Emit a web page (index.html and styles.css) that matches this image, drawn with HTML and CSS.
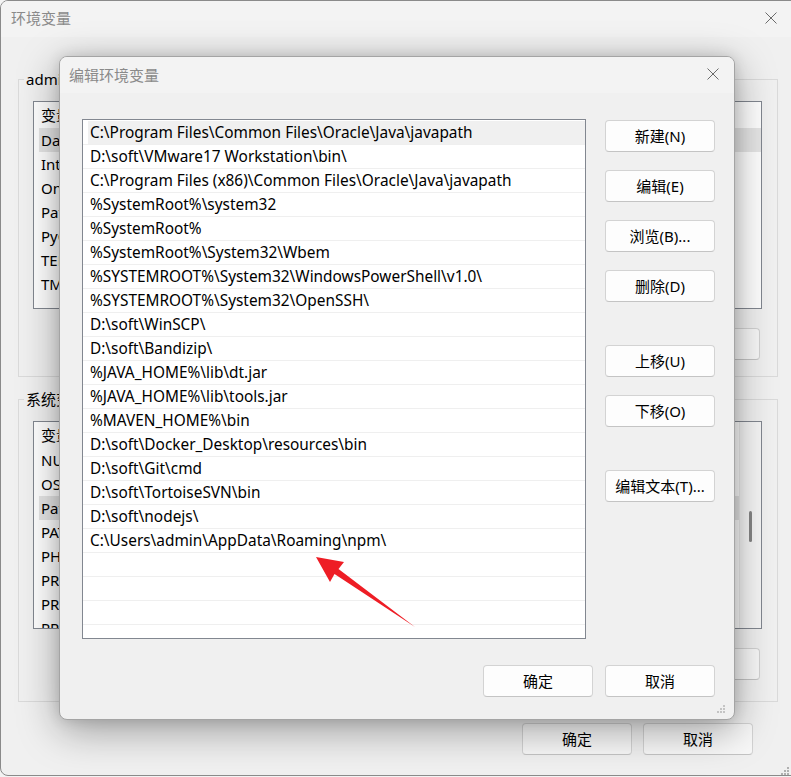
FILE: index.html
```html
<!DOCTYPE html>
<html lang="zh-CN">
<head>
<meta charset="utf-8">
<title>环境变量</title>
<link rel="stylesheet" href="styles.css">
</head>
<body>
<div class="win">
  <div class="titlebar">
    <span class="title">环境变量</span>
    <svg class="close" width="12" height="12" viewBox="0 0 12 12"><path d="M0.5 0.5 L11.5 11.5 M11.5 0.5 L0.5 11.5" /></svg>
  </div>
  <div class="winbody">
    <fieldset class="group">
      <legend>admin 的用户变量(U)</legend>
      <div class="blist">
        <div class="bhead"><span class="c1">变量</span><span>值</span></div>
        <div class="brow sel"><span class="c1">DataGrip</span><span>D:\soft\DataGrip\bin;</span></div>
        <div class="brow"><span class="c1">IntelliJ IDEA</span><span>D:\soft\IntelliJ IDEA\bin;</span></div>
        <div class="brow"><span class="c1">OneDrive</span><span>C:\Users\admin\OneDrive</span></div>
        <div class="brow"><span class="c1">Path</span><span>C:\Users\admin\AppData\Local\Microsoft\WindowsApps;</span></div>
        <div class="brow"><span class="c1">PyCharm</span><span>D:\soft\PyCharm\bin;</span></div>
        <div class="brow"><span class="c1">TEMP</span><span>C:\Users\admin\AppData\Local\Temp</span></div>
        <div class="brow"><span class="c1">TMP</span><span>C:\Users\admin\AppData\Local\Temp</span></div>
      </div>
      <div class="btnrow">
        <button class="btn bgbtn">新建(N)...</button>
        <button class="btn bgbtn">编辑(E)...</button>
        <button class="btn bgbtn">删除(D)</button>
      </div>
    </fieldset>
    <fieldset class="group group2">
      <legend>系统变量(S)</legend>
      <div class="blist">
        <div class="bhead"><span class="c1">变量</span><span>值</span></div>
        <div class="brow"><span class="c1">NUMBER_OF_PROCESSORS</span><span>16</span></div>
        <div class="brow"><span class="c1">OS</span><span>Windows_NT</span></div>
        <div class="brow sel"><span class="c1">Path</span><span>C:\Program Files\Common Files\Oracle\Java\javapath;</span></div>
        <div class="brow"><span class="c1">PATHEXT</span><span>.COM;.EXE;.BAT;.CMD;.VBS;.VBE;.JS;.JSE;.WSF;.WSH;.MSC</span></div>
        <div class="brow"><span class="c1">PHP_HOME</span><span>D:\soft\php</span></div>
        <div class="brow"><span class="c1">PROCESSOR_ARCHITECTURE</span><span>AMD64</span></div>
        <div class="brow"><span class="c1">PROCESSOR_IDENTIFIER</span><span>Intel64 Family 6</span></div>
        <div class="brow"><span class="c1">PROCESSOR_LEVEL</span><span>6</span></div>
        <div class="bscroll"><div class="bthumb"></div></div>
      </div>
      <div class="btnrow">
        <button class="btn bgbtn">新建(W)...</button>
        <button class="btn bgbtn">编辑(I)...</button>
        <button class="btn bgbtn">删除(L)</button>
      </div>
    </fieldset>
    <div class="footer">
      <button class="btn bgbtn">确定</button>
      <button class="btn bgbtn">取消</button>
    </div>
  </div>
  <svg class="grip outer-grip" width="10" height="10" viewBox="0 0 10 10"><g fill="#b0b0b0"><rect x="7" y="1" width="2" height="2"/><rect x="4" y="4" width="2" height="2"/><rect x="7" y="4" width="2" height="2"/><rect x="1" y="7" width="2" height="2"/><rect x="4" y="7" width="2" height="2"/><rect x="7" y="7" width="2" height="2"/></g></svg>
</div>

<div class="dialog">
  <div class="dtitlebar">
    <span class="title">编辑环境变量</span>
    <svg class="close" width="12" height="12" viewBox="0 0 12 12"><path d="M0.5 0.5 L11.5 11.5 M11.5 0.5 L0.5 11.5" /></svg>
  </div>
  <div class="dbody">
    <div class="plist">
      <div class="prow sel">C:\Program Files\Common Files\Oracle\Java\javapath</div>
      <div class="prow">D:\soft\VMware17 Workstation\bin\</div>
      <div class="prow">C:\Program Files (x86)\Common Files\Oracle\Java\javapath</div>
      <div class="prow">%SystemRoot%\system32</div>
      <div class="prow">%SystemRoot%</div>
      <div class="prow">%SystemRoot%\System32\Wbem</div>
      <div class="prow">%SYSTEMROOT%\System32\WindowsPowerShell\v1.0\</div>
      <div class="prow">%SYSTEMROOT%\System32\OpenSSH\</div>
      <div class="prow">D:\soft\WinSCP\</div>
      <div class="prow">D:\soft\Bandizip\</div>
      <div class="prow">%JAVA_HOME%\lib\dt.jar</div>
      <div class="prow">%JAVA_HOME%\lib\tools.jar</div>
      <div class="prow">%MAVEN_HOME%\bin</div>
      <div class="prow">D:\soft\Docker_Desktop\resources\bin</div>
      <div class="prow">D:\soft\Git\cmd</div>
      <div class="prow">D:\soft\TortoiseSVN\bin</div>
      <div class="prow">D:\soft\nodejs\</div>
      <div class="prow">C:\Users\admin\AppData\Roaming\npm\</div>
      <div class="prow"></div>
      <div class="prow"></div>
      <div class="prow"></div>
      <div class="prow"></div>
    </div>
    <div class="side">
      <button class="btn">新建(N)</button>
      <button class="btn">编辑(E)</button>
      <button class="btn">浏览(B)...</button>
      <button class="btn">删除(D)</button>
      <button class="btn sep">上移(U)</button>
      <button class="btn">下移(O)</button>
      <button class="btn sep">编辑文本(T)...</button>
    </div>
    <div class="dfooter">
      <button class="btn">确定</button>
      <button class="btn">取消</button>
    </div>
  </div>
  <svg class="grip dgrip" width="10" height="10" viewBox="0 0 10 10"><g fill="#c4c4c4"><rect x="7" y="1" width="2" height="2"/><rect x="4" y="4" width="2" height="2"/><rect x="7" y="4" width="2" height="2"/><rect x="1" y="7" width="2" height="2"/><rect x="4" y="7" width="2" height="2"/><rect x="7" y="7" width="2" height="2"/></g></svg>
</div>

<svg class="arrow" width="791" height="777" viewBox="0 0 791 777">
  <polygon points="316,557 344,562 338.5,569 415,627 334.5,574 330,582" fill="#ee1d25"/>
</svg>
</body>
</html>
```

FILE: styles.css
```css
* { box-sizing: border-box; }

html, body {
  margin: 0;
  padding: 0;
  width: 791px;
  height: 777px;
  overflow: hidden;
  background: #f3f3f3;
  font-family: "Noto Sans", "Noto Sans CJK SC", sans-serif;
  font-size: 15px;
  color: #000;
}

.win {
  position: relative;
  width: 810px;
  height: 776px;
  border: 1px solid #8a8a8a;
  border-radius: 8px;
  background: #f0f0f0;
  overflow: hidden;
}

.titlebar {
  height: 36px;
  background: #f3f3f3;
  display: flex;
  align-items: center;
  justify-content: space-between;
  padding: 0 32px 3px 10px;
}

.title {
  flex: none;
  white-space: nowrap;
  color: #8a8a8a;
  font-size: 15px;
  font-family: "Noto Sans CJK SC", sans-serif;
}

.close {
  flex: none;
  stroke: #6a6a6a;
  stroke-width: 1;
  fill: none;
}

.winbody {
  padding: 32px 0 0 17px;
}

.group {
  width: 760px;
  margin: 0;
  padding: 12px 6px 16px 5px;
  border: 1px solid #dadada;
}

.group2 {
  margin-top: 12px;
  padding-bottom: 21px;
}

.group legend {
  padding: 0 2px;
  line-height: 20px;
  font-size: 15px;
}

.blist {
  position: relative;
  margin: 0 9px;
  height: 208px;
  border: 1px solid #828790;
  background: #fff;
  overflow: hidden;
}

.bhead, .brow {
  display: flex;
  white-space: nowrap;
  padding-left: 7px;
}

.bhead {
  height: 26px;
  line-height: 26px;
}

.brow {
  height: 24px;
  line-height: 24px;
}

.c1 {
  width: 240px;
  flex: none;
}

.brow.sel {
  background: #e6e6e6;
  box-shadow: inset 5px 0 0 #fff;
}

.bscroll {
  position: absolute;
  top: 0;
  right: 0;
  width: 22px;
  height: 100%;
  background: #f6f6f6;
  border-left: 1px solid #ececec;
}

.bthumb {
  position: absolute;
  left: 9px;
  top: 89px;
  width: 3px;
  height: 31px;
  border-radius: 2px;
  background: #858585;
}

.btnrow {
  display: flex;
  justify-content: flex-end;
  gap: 10px;
  margin: 19px 11px 0 0;
}

.btn {
  width: 110px;
  height: 32px;
  padding: 0;
  border: 1px solid #d3d3d3;
  border-bottom-color: #c4c4c4;
  border-radius: 4px;
  background: #fdfdfd;
  font-family: "Noto Sans", "Noto Sans CJK SC", sans-serif;
  font-size: 15px;
  color: #000;
  line-height: 30px;
}

.bgbtn {
  background: #f8f8f8;
}

.footer {
  width: 760px;
  display: flex;
  justify-content: flex-end;
  gap: 11px;
  margin-top: 21px;
  padding-right: 25px;
}

.grip {
  position: absolute;
}

.outer-grip {
  left: 779px;
  top: 765px;
}

/* dialog */
.dialog {
  position: absolute;
  left: 59px;
  top: 56px;
  width: 676px;
  height: 664px;
  border: 1px solid #a4a4a4;
  border-radius: 8px;
  background: #f0f0f0;
  box-shadow: 0 10px 40px rgba(0, 0, 0, 0.36), 0 0 14px rgba(0, 0, 0, 0.12);
  overflow: hidden;
}

.dtitlebar {
  height: 36px;
  background: #f3f3f3;
  display: flex;
  align-items: center;
  justify-content: space-between;
  padding: 0 15px 2px 9px;
}

.dbody {
  display: grid;
  grid-template-columns: 504px 110px;
  column-gap: 19px;
  padding: 26px 0 0 22px;
}

.plist {
  height: 520px;
  padding-top: 1px;
  border: 1px solid #828790;
  background: #fff;
  overflow: hidden;
}

.prow {
  height: 24px;
  line-height: 23px;
  padding-left: 7px;
  border-bottom: 1px solid #efefef;
  white-space: nowrap;
  font-size: 15.4px;
}

.prow.sel {
  background: #f0f0f0;
  box-shadow: inset 5px 0 0 #fff;
}

.side {
  display: flex;
  flex-direction: column;
  gap: 18px;
  padding-top: 1px;
}

.side .sep {
  margin-top: 25px;
}

.dfooter {
  grid-column: 1 / 3;
  display: flex;
  justify-content: flex-end;
  gap: 12px;
  margin-top: 26px;
}

.dgrip {
  right: 8px;
  bottom: 5px;
}

.arrow {
  position: absolute;
  left: 0;
  top: 0;
  pointer-events: none;
}
```
